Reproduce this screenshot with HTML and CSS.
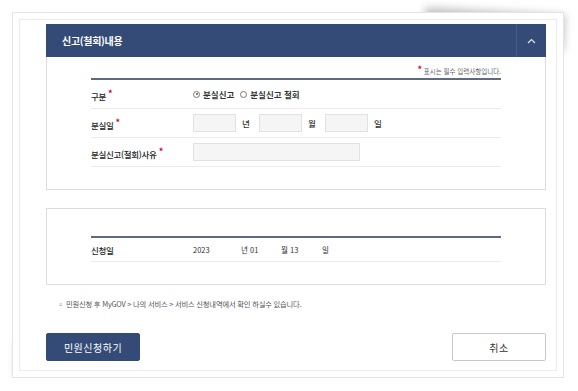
FILE: index.html
```html
<!DOCTYPE html>
<html lang="ko">
<head>
    <meta charset="UTF-8">
    <meta name="viewport" content="width=device-width, initial-scale=1.0">
    <title>분실신고</title>
    <link rel="stylesheet" href="styles.css">
</head>
<body>
    <div class="sheet">
        <div class="inner">
            <section class="panel">
                <div class="panel-head">
                    <h2>신고(철회)내용</h2>
                    <span class="toggle">
                        <svg width="9" height="6" viewBox="0 0 9 6"><path d="M1 5 L4.5 1.5 L8 5" fill="none" stroke="#dfe4ee" stroke-width="1.2"/></svg>
                    </span>
                </div>
                <div class="panel-body">
                    <p class="req-note"><span class="star">*</span> 표시는 필수 입력사항입니다.</p>
                    <div class="table">
                        <div class="tr">
                            <div class="th">구분<span class="star">*</span></div>
                            <div class="td radios">
                                <span class="radio checked"></span><b>분실신고</b>
                                <span class="radio"></span><b>분실신고 철회</b>
                            </div>
                        </div>
                        <div class="tr">
                            <div class="th">분실일<span class="star">*</span></div>
                            <div class="td">
                                <span class="box short"></span><span class="unit">년</span>
                                <span class="box short"></span><span class="unit">월</span>
                                <span class="box short"></span><span class="unit">일</span>
                            </div>
                        </div>
                        <div class="tr">
                            <div class="th">분실신고(철회)사유<span class="star">*</span></div>
                            <div class="td">
                                <span class="box long"></span>
                            </div>
                        </div>
                    </div>
                </div>
            </section>

            <section class="panel plain">
                <div class="table">
                    <div class="tr small">
                        <div class="th">신청일</div>
                        <div class="td date">
                            <span class="y">2023</span>
                            <span class="m">년 01</span>
                            <span class="d">월 13</span>
                            <span>일</span>
                        </div>
                    </div>
                </div>
            </section>

            <p class="notice">◦ 민원신청 후 MyGOV &gt; 나의 서비스 &gt; 서비스 신청내역에서 확인 하실수 있습니다.</p>

            <div class="buttons">
                <button class="btn primary">민원신청하기</button>
                <button class="btn">취소</button>
            </div>
        </div>
    </div>
</body>
</html>
```

FILE: styles.css
```css
* {
    padding: 0;
    margin: 0;
    box-sizing: border-box;
    font-family: "Noto Sans CJK KR", "Noto Sans", sans-serif;
}

body {
    background-color: #fff;
}

.sheet {
    position: relative;
    width: 552px;
    height: 366px;
    margin: 12px 0 0 12px;
    padding: 6px;
    border: 1px solid #e4e4e4;
    background-color: #fff;
}

/* curled page shadows */
.sheet::before,
.sheet::after {
    content: "";
    position: absolute;
    z-index: -1;
    width: 140px;
    height: 36px;
}

.sheet::before {
    top: 3px;
    right: 3px;
    box-shadow: 4px -5px 8px rgba(0, 0, 0, 0.25);
    transform: rotate(3deg);
}

.sheet::after {
    bottom: 3px;
    left: 6px;
    width: 180px;
    box-shadow: -3px 5px 8px rgba(0, 0, 0, 0.22);
    transform: rotate(2deg);
}

.inner {
    height: 100%;
    border: 1px solid #ececec;
    padding: 4px 10px 9px 26px;
    display: flex;
    flex-direction: column;
}

.panel {
    border: 1px solid #dcdcdc;
    border-top: none;
}

.panel-head {
    height: 33px;
    background-color: #344b77;
    display: flex;
    align-items: center;
    justify-content: space-between;
    margin: 0 -1px;
}

.panel-head h2 {
    color: #fff;
    font-size: 10px;
    font-weight: 700;
    padding-left: 16px;
    letter-spacing: -0.3px;
}

.toggle {
    width: 30px;
    height: 100%;
    border-left: 1px solid #4a5f87;
    display: flex;
    align-items: center;
    justify-content: center;
}

.panel-body {
    padding: 4px 44px 22px 44px;
}

.req-note {
    text-align: right;
    font-size: 6.5px;
    color: #666;
    height: 17px;
    line-height: 17px;
}

.star {
    color: #d0021b;
    font-size: 9px;
    font-weight: 700;
    vertical-align: 3px;
    margin-left: 2px;
}

.req-note .star {
    margin: 0;
    vertical-align: 1px;
}

.table {
    border-top: 2px solid #5d6b80;
}

.tr {
    display: flex;
    align-items: center;
    height: 29px;
    border-bottom: 1px solid #ebebeb;
}

.tr.small {
    height: 24px;
}

.th {
    width: 102px;
    font-size: 8.5px;
    font-weight: 500;
    color: #222;
    letter-spacing: -0.3px;
}

.td {
    display: flex;
    align-items: center;
    font-size: 8.5px;
    color: #333;
}

.radios b {
    font-weight: 700;
    margin-right: 6px;
}

.radio {
    width: 7px;
    height: 7px;
    border: 1px solid #777;
    border-radius: 50%;
    margin-right: 3px;
    position: relative;
}

.radio.checked::after {
    content: "";
    position: absolute;
    left: 1.5px;
    top: 1.5px;
    width: 2px;
    height: 2px;
    background-color: #555;
    border-radius: 50%;
}

.box {
    display: inline-block;
    height: 18px;
    background-color: #f5f5f5;
    border: 1px solid #e2e2e2;
}

.box.short {
    width: 43px;
}

.box.long {
    width: 167px;
}

.unit {
    width: 23px;
    padding-left: 6px;
    font-weight: 500;
}

.date {
    font-size: 7.5px;
}

.date span {
    display: inline-block;
}

.date .y {
    width: 48px;
}

.date .m {
    width: 40px;
}

.date .d {
    width: 41px;
}

.panel.plain {
    margin-top: 18px;
    border-top: 1px solid #dcdcdc;
    padding: 27px 44px 22px 44px;
}

.notice {
    margin-top: 14px;
    padding-left: 11px;
    font-size: 7.3px;
    color: #555;
    letter-spacing: -0.2px;
}

.buttons {
    margin-top: auto;
    display: flex;
    justify-content: space-between;
}

.btn {
    width: 94px;
    height: 28px;
    font-size: 10px;
    border-radius: 2px;
    border: 1px solid #c8c8c8;
    background-color: #fff;
    color: #333;
    letter-spacing: 0.5px;
}

.btn.primary {
    background-color: #344b77;
    border-color: #344b77;
    color: #fff;
}
```
